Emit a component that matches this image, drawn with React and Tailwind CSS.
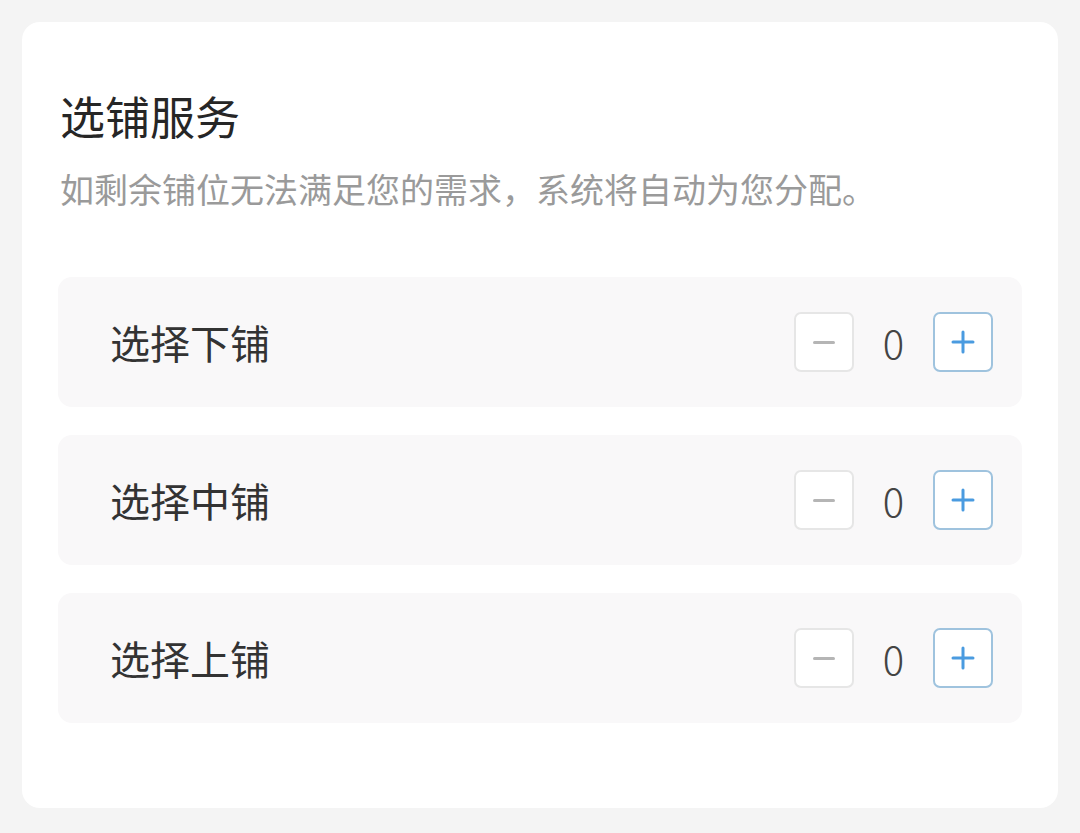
import React, { useState } from 'react';

const rows = [
  { id: 'lower', label: '选择下铺' },
  { id: 'middle', label: '选择中铺' },
  { id: 'upper', label: '选择上铺' },
];

const Stepper = ({ value, onChange }) => (
  <div className="flex items-center">
    <button
      type="button"
      onClick={() => onChange(Math.max(0, value - 1))}
      className="w-[60px] h-[60px] flex items-center justify-center rounded-[7px] border-2 border-[#e6e6e6] bg-white"
    >
      <span className="block w-[22px] h-[3px] rounded-full bg-[#b5b5b5]" />
    </button>
    <span className="w-[79px] text-center text-[40px] leading-[48px] font-light text-[#444]">{value}</span>
    <button
      type="button"
      onClick={() => onChange(value + 1)}
      className="w-[60px] h-[60px] flex items-center justify-center rounded-[7px] border-2 border-[#9fc3de] bg-white"
    >
      <svg width="24" height="24" viewBox="0 0 24 24">
        <path d="M12 2v20M2 12h20" stroke="#4a9be0" strokeWidth="3" strokeLinecap="round" />
      </svg>
    </button>
  </div>
);

export default function App() {
  const [counts, setCounts] = useState({ lower: 0, middle: 0, upper: 0 });

  return (
    <div
      className="min-h-[833px] bg-[#f4f4f4] p-[22px]"
      style={{ fontFamily: '"Noto Sans CJK SC", "Noto Sans", sans-serif' }}
    >
      <div className="bg-white rounded-[18px] pt-[70px] pb-[85px] pl-[36px] pr-[36px]">
        <h1 className="pl-[2px] text-[45px] leading-[48px] font-normal text-[#262626]">选铺服务</h1>
        <p className="mt-[29px] pl-[2px] text-[34px] leading-[40px] text-[#9a9a9a]">
          如剩余铺位无法满足您的需求，系统将自动为您分配。
        </p>

        <div className="mt-[68px] flex flex-col gap-[28px]">
          {rows.map((row) => (
            <div
              key={row.id}
              className="h-[130px] flex items-center justify-between rounded-[14px] bg-[#f9f8f9] pl-[52px] pr-[29px]"
            >
              <span className="text-[40px] leading-[48px] text-[#333]">{row.label}</span>
              <Stepper
                value={counts[row.id]}
                onChange={(v) => setCounts((prev) => ({ ...prev, [row.id]: v }))}
              />
            </div>
          ))}
        </div>
      </div>
    </div>
  );
}
